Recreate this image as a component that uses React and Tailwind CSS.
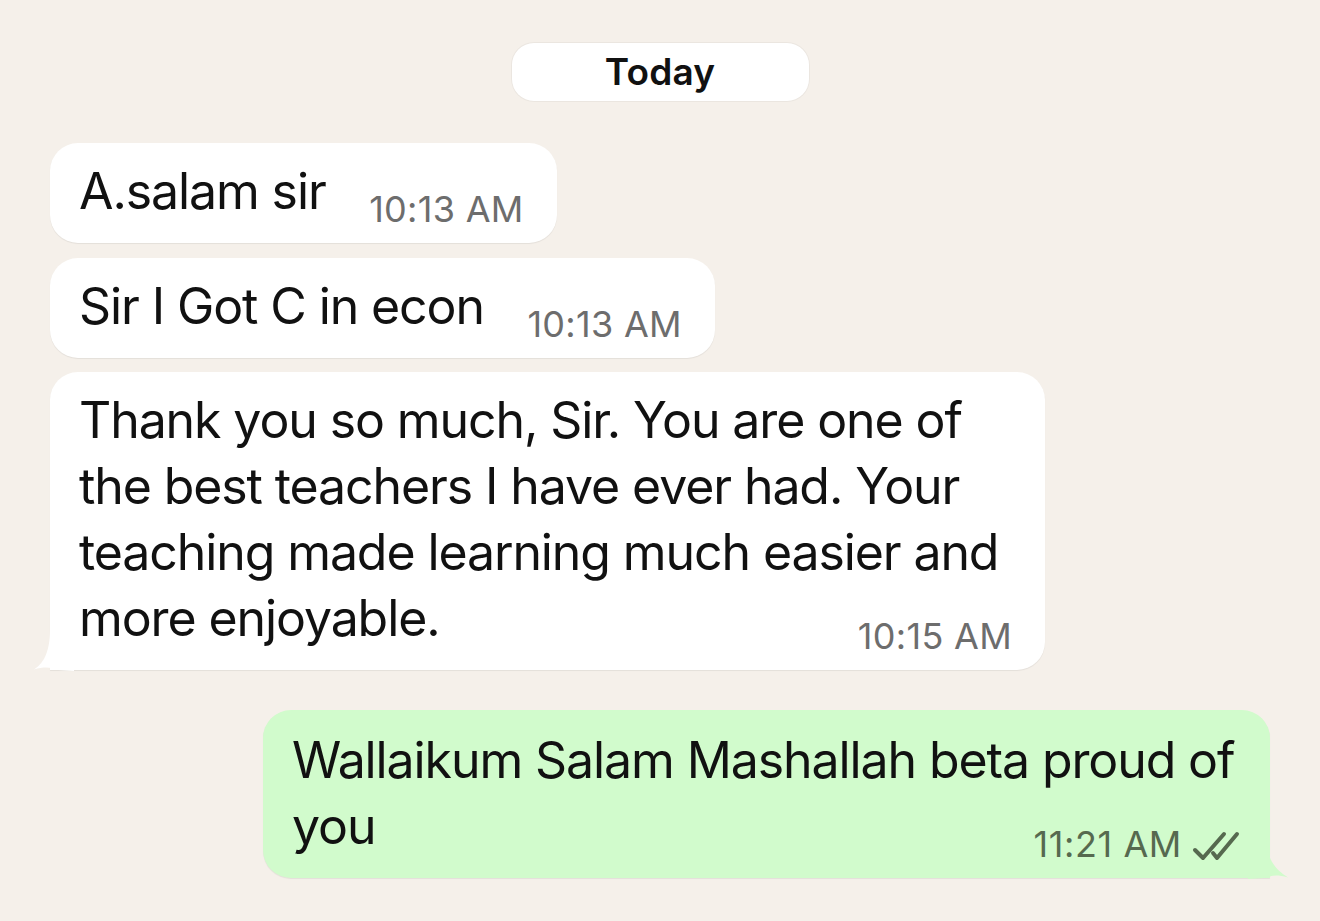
import React from "react";

const FONT = { fontFamily: "Inter, 'Noto Sans', 'Liberation Sans', sans-serif" };

function DoubleCheck() {
  return (
    <svg width="48" height="30" viewBox="0 0 48 30" fill="none" className="ml-[10px] mb-[1px]">
      <path d="M3 19 L11 27 L32 3" stroke="#56694f" strokeWidth="4" strokeLinecap="round" strokeLinejoin="round" />
      <path d="M21 22 L25 27 L45 3" stroke="#56694f" strokeWidth="4" strokeLinecap="round" strokeLinejoin="round" />
    </svg>
  );
}

function TailLeft() {
  return (
    <svg className="absolute left-[-16px] bottom-[-1px]" width="40" height="42" viewBox="0 0 40 42">
      <path d="M40 0 L40 42 L24 41 C18 39 12 37 0 40.5 C8 35 16 26 16 0 Z" fill="#ffffff" />
    </svg>
  );
}

function TailRight() {
  return (
    <svg className="absolute right-[-18px] bottom-[-1px]" width="40" height="42" viewBox="0 0 40 42">
      <path d="M0 0 L0 42 L16 41 C22 39 28 37 40 40.5 C32 35 18 26 18 0 Z" fill="#d1fbcc" />
    </svg>
  );
}

function Incoming({ text, time, className = "", tail = false }) {
  return (
    <div
      className={`relative self-start bg-white rounded-[28px] pl-[29px] pr-[33px] pt-[15px] pb-[19px] text-[50px] leading-[66px] tracking-[-1.1px] text-[#111111] shadow-[0_1px_1px_rgba(0,0,0,0.07)] ${tail ? "rounded-bl-none" : ""} ${className}`}
    >
      {tail && <TailLeft />}
      <span className="relative">{text}</span>
      <span className="inline-block w-[198px]" />
      <span className="absolute right-[33px] bottom-[16px] text-[36px] leading-[36px] tracking-[0.3px] text-[#6d6d6d]">
        {time}
      </span>
    </div>
  );
}

export default function App() {
  return (
    <div className="w-[1320px] h-[921px] bg-[#f5f0ea] overflow-hidden" style={FONT}>
      <div className="flex flex-col pt-[43px] px-[50px]">
        {/* date chip */}
        <div className="self-center w-[297px] h-[58px] rounded-[22px] bg-white flex items-center justify-center text-[37px] font-semibold tracking-[0.2px] text-[#111] shadow-[0_0_0_1px_rgba(0,0,0,0.04)]">
          Today
        </div>

        <Incoming className="mt-[42px]" text="A.salam sir" time="10:13 AM" />
        <Incoming className="mt-[15px]" text="Sir I Got C in econ" time="10:13 AM" />
        <Incoming
          className="mt-[14px] w-[995px]"
          tail
          text="Thank you so much, Sir. You are one of the best teachers I have ever had. Your teaching made learning much easier and more enjoyable."
          time="10:15 AM"
        />

        {/* outgoing */}
        <div className="relative self-end mt-[40px] w-[1007px] bg-[#d1fbcc] rounded-[28px] rounded-br-none pl-[29px] pr-[30px] pt-[17px] pb-[19px] text-[50px] leading-[66px] tracking-[-1.1px] text-[#111111] shadow-[0_1px_1px_rgba(0,0,0,0.07)]">
          <TailRight />
          <span className="relative">Wallaikum Salam Mashallah beta proud of you</span>
          <span className="inline-block w-[240px]" />
          <span className="absolute right-[30px] bottom-[16px] flex items-end text-[36px] leading-[36px] tracking-[0.6px] text-[#56694f]">
            11:21 AM
            <DoubleCheck />
          </span>
        </div>
      </div>
    </div>
  );
}
